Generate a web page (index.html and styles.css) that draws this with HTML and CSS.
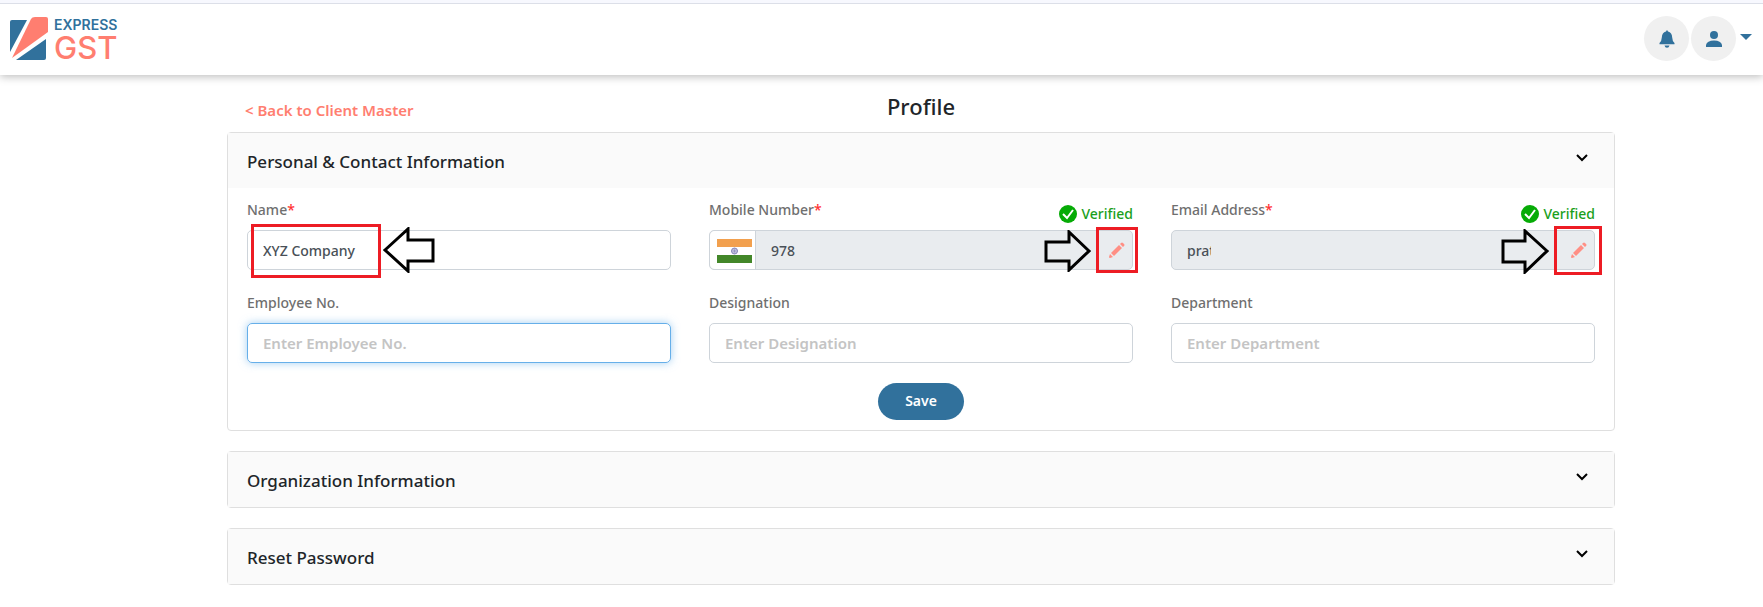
FILE: index.html
```html
<!DOCTYPE html>
<html lang="en">
<head>
    <meta charset="UTF-8">
    <meta name="viewport" content="width=device-width, initial-scale=1.0">
    <title>Profile - Express GST</title>
    <link rel="stylesheet" href="styles.css">
</head>
<body>
    <header class="topbar">
        <a href="#" class="logo">
            <svg width="40" height="44" viewBox="0 0 40 44">
                <path fill="#31719c" d="M3 3h15L1 35V5q0-2 2-2z"/>
                <path fill="#ff7e70" d="M22 2q1-2 4-2h11q2 0 2 2v13L3 41z"/>
                <path fill="#31719c" d="M37 22v19q0 2-2 2H7z"/>
            </svg>
            <span class="logo-text">
                <span class="logo-express">EXPRESS</span>
                <span class="logo-gst">GST</span>
            </span>
        </a>
        <div class="actions">
            <button class="round-btn" type="button" aria-label="Notifications">
                <svg width="16" height="18" viewBox="0 0 16 18" fill="#31719c">
                    <path d="M7 1.500Q8-.8 9 1.500Q13 2.700 13.200 7.500Q13.300 11 15.500 13v1.300H.5V13Q2.700 11 2.800 7.500Q3 2.700 7 1.500zM5.500 15.400h5Q10 17.800 8 17.800T5.500 15.400z"/>
                </svg>
            </button>
            <button class="round-btn" type="button" aria-label="Account">
                <svg width="16" height="16" viewBox="0 0 16 16" fill="#31719c">
                    <circle cx="8" cy="4" r="4"/>
                    <path d="M0 16v-2q1-4.500 8-4.500t8 4.500v2z"/>
                </svg>
            </button>
            <span class="caret"></span>
        </div>
    </header>

    <main class="content">
        <div class="page-head">
            <a href="#" class="back">&lt; Back to Client Master</a>
            <h1>Profile</h1>
        </div>

        <section class="card">
            <div class="card-header">
                <h2>Personal &amp; Contact Information</h2>
                <svg class="chevron" width="12" height="8" viewBox="0 0 12 8"><path d="M1 1l5 5 5-5"/></svg>
            </div>
            <form class="card-body">
                <div class="fields">
                    <div class="field">
                        <div class="label-row">
                            <label for="name">Name<span class="req">*</span></label>
                        </div>
                        <div class="control">
                            <input type="text" id="name" value="XYZ Company">
                            <span class="mark mark-name"></span>
                            <svg class="arrow arrow-name" width="52" height="46" viewBox="0 0 52 46"><path d="M2 23L25 2v11h25v21H25v10z"/></svg>
                        </div>
                    </div>
                    <div class="field">
                        <div class="label-row">
                            <label for="mobile">Mobile Number<span class="req">*</span></label>
                            <span class="verified">
                                <svg width="18" height="18" viewBox="0 0 18 18"><circle cx="9" cy="9" r="9" fill="#06ab06"/><path d="M4 9l4 4 6-8" fill="none" stroke="#fff" stroke-width="2"/></svg>
                                Verified
                            </span>
                        </div>
                        <div class="control locked">
                            <span class="flag">
                                <svg width="35" height="24" viewBox="0 0 35 24">
                                    <path fill="#f2a04e" d="M0 0h35v8H0z"/>
                                    <path fill="#fff" d="M0 8h35v8H0z"/>
                                    <path fill="#438729" d="M0 16h35v8H0z"/>
                                    <circle cx="17.500" cy="12" r="3" fill="#d5d5ea" stroke="#8585b8"/>
                                    <path stroke="#8585b8" stroke-width=".5" d="M14.500 12h6M17.500 9v6M15.500 10l4 4M15.500 14l4-4"/>
                                </svg>
                            </span>
                            <input type="text" id="mobile" value="978" readonly>
                            <button class="edit" type="button" aria-label="Edit mobile number">
                                <svg width="18" height="18" viewBox="0 0 18 18" fill="#ff8f85"><path d="M11 4l3 3-8 8-3-3zM12 3l1-1q1-1 2 0l1 1q1 1 0 2l-1 1zM2 13l3 3-3 1q-1 0-1-1z"/></svg>
                            </button>
                            <span class="mark mark-mobile"></span>
                            <svg class="arrow arrow-mobile" width="47" height="42" viewBox="0 0 47 42"><path d="M45 21L25 2v10H2v19h23v9z"/></svg>
                        </div>
                    </div>
                    <div class="field">
                        <div class="label-row">
                            <label for="email">Email Address<span class="req">*</span></label>
                            <span class="verified">
                                <svg width="18" height="18" viewBox="0 0 18 18"><circle cx="9" cy="9" r="9" fill="#06ab06"/><path d="M4 9l4 4 6-8" fill="none" stroke="#fff" stroke-width="2"/></svg>
                                Verified
                            </span>
                        </div>
                        <div class="control locked">
                            <input class="cut" type="text" id="email" value="prat" readonly>
                            <button class="edit" type="button" aria-label="Edit email address">
                                <svg width="18" height="18" viewBox="0 0 18 18" fill="#ff8f85"><path d="M11 4l3 3-8 8-3-3zM12 3l1-1q1-1 2 0l1 1q1 1 0 2l-1 1zM2 13l3 3-3 1q-1 0-1-1z"/></svg>
                            </button>
                            <span class="mark mark-email"></span>
                            <svg class="arrow arrow-email" width="48" height="45" viewBox="0 0 48 45"><path d="M46 22L24 2v10H2v21h22v10z"/></svg>
                        </div>
                    </div>
                    <div class="field">
                        <div class="label-row">
                            <label for="employee">Employee No.</label>
                        </div>
                        <div class="control active">
                            <input type="text" id="employee" placeholder="Enter Employee No.">
                        </div>
                    </div>
                    <div class="field">
                        <div class="label-row">
                            <label for="designation">Designation</label>
                        </div>
                        <div class="control">
                            <input type="text" id="designation" placeholder="Enter Designation">
                        </div>
                    </div>
                    <div class="field">
                        <div class="label-row">
                            <label for="department">Department</label>
                        </div>
                        <div class="control">
                            <input type="text" id="department" placeholder="Enter Department">
                        </div>
                    </div>
                </div>
                <button class="save" type="submit">Save</button>
            </form>
        </section>

        <section class="card">
            <div class="card-header">
                <h2>Organization Information</h2>
                <svg class="chevron" width="12" height="8" viewBox="0 0 12 8"><path d="M1 1l5 5 5-5"/></svg>
            </div>
        </section>

        <section class="card">
            <div class="card-header">
                <h2>Reset Password</h2>
                <svg class="chevron" width="12" height="8" viewBox="0 0 12 8"><path d="M1 1l5 5 5-5"/></svg>
            </div>
        </section>
    </main>
</body>
</html>
```
FILE: styles.css
```css
* {
    box-sizing: border-box;
}

body {
    margin: 0;
    border-top: 3px solid #f7f8fe;
    background: #fff;
    color: #212529;
    font-family: "Segoe UI", "Noto Sans", "Open Sans", sans-serif;
    font-size: 14px;
    font-weight: 500;
}

input, button {
    font: inherit;
}

a {
    text-decoration: none;
}

/* top bar */
.topbar {
    display: flex;
    justify-content: space-between;
    align-items: center;
    height: 72px;
    padding: 0 11px 2px 9px;
    border-top: 1px solid #dcdfe8;
    box-shadow: 0 2px 8px rgba(0, 0, 0, 0.25);
}

.logo {
    display: flex;
    align-items: center;
    gap: 5px;
    font-family: Inter, sans-serif;
}

.logo-text {
    display: flex;
    flex-direction: column;
    padding-top: 3px;
}

.logo-express {
    color: #31719c;
    font-size: 14px;
    font-weight: 600;
    line-height: 14px;
}

.logo-gst {
    color: #ff7e70;
    font-size: 31px;
    font-weight: 500;
    line-height: 31px;
}

.actions {
    display: flex;
    align-items: center;
    gap: 2px;
}

.round-btn {
    display: flex;
    align-items: center;
    justify-content: center;
    width: 45px;
    height: 45px;
    padding: 0;
    border: 0;
    border-radius: 50%;
    background: #f0f0f0;
}

.caret {
    margin: 0 0 4px 2px;
    border: 6px solid transparent;
    border-top-color: #31719c;
    border-bottom: 0;
}

/* page */
.content {
    margin-left: 79px;
    padding: 16px 148px 22px;
}

.page-head {
    display: grid;
    grid-template-columns: 1fr auto 1fr;
    align-items: center;
    height: 41px;
    padding: 0 18px;
}

.back {
    padding-bottom: 4px;
    color: #ff7e70;
    font-size: 15px;
    font-weight: 600;
}

h1, h2 {
    margin: 0;
    font-weight: 500;
}

h1 {
    padding-bottom: 12px;
    font-size: 22px;
    line-height: 28px;
}

h2 {
    font-size: 17px;
    line-height: 24px;
}

.card {
    margin-bottom: 20px;
    border: 1px solid #dfdfdf;
    border-radius: 4px;
}

.card-header {
    display: flex;
    justify-content: space-between;
    align-items: flex-start;
    padding: 17px 26px 14px 19px;
    background: #fafafa;
}

.chevron {
    margin-top: 4px;
    fill: none;
    stroke: #000;
    stroke-width: 2;
}

.card-body {
    padding: 12px 19px 10px;
}

.fields {
    display: grid;
    grid-template-columns: repeat(3, 1fr);
    gap: 23px 38px;
}

.label-row {
    display: flex;
    justify-content: space-between;
    height: 30px;
}

label {
    color: #6f6f6f;
    line-height: 20px;
}

.req {
    color: #f33;
}

.verified {
    display: flex;
    align-items: center;
    gap: 4px;
    height: 27px;
    color: #1ba01b;
}

.control {
    position: relative;
    display: flex;
    height: 40px;
    border: 1px solid #ced4da;
    border-radius: 5px;
}

.control input {
    flex: 1;
    min-width: 0;
    padding: 0 15px;
    border: 0;
    outline: 0;
    border-radius: 5px;
    background: transparent;
    color: #495057;
}

.control input::placeholder {
    color: #c4c4c4;
    font-size: 15px;
    font-weight: 600;
}

.control .cut {
    flex: none;
    width: 39px;
    padding-right: 0;
}

.locked {
    background: #e9ecef;
}

.active {
    border-color: #66afe9;
    box-shadow: 0 0 8px rgba(102, 175, 233, 0.6);
}

.flag {
    display: flex;
    align-items: center;
    padding: 2px 3px 0 7px;
    border-right: 1px solid #ced4da;
    border-radius: 5px 0 0 5px;
    background: #fff;
}

.edit {
    display: flex;
    align-items: center;
    margin-left: auto;
    padding: 0 6px;
    border: 0;
    background: none;
}

.save {
    display: block;
    width: 86px;
    height: 37px;
    margin: 20px auto 0;
    padding: 0 0 2px;
    border: 0;
    border-radius: 20px;
    background: #31719c;
    color: #fff;
    font-weight: 600;
}

/* highlights over the editable parts */
.mark {
    position: absolute;
    border: 3px solid #ed1c24;
    pointer-events: none;
}

.mark-name {
    left: 3px;
    top: -7px;
    width: 130px;
    height: 54px;
}

.mark-mobile {
    right: -6px;
    top: -4px;
    width: 42px;
    height: 46px;
}

.mark-email {
    right: -8px;
    top: -5px;
    width: 48px;
    height: 49px;
}

.arrow {
    position: absolute;
    fill: none;
    stroke: #000;
    stroke-width: 3;
    pointer-events: none;
}

.arrow-name {
    left: 135px;
    top: -4px;
}

.arrow-mobile {
    right: 41px;
    top: -1px;
}

.arrow-email {
    right: 45px;
    top: -2px;
}
```
